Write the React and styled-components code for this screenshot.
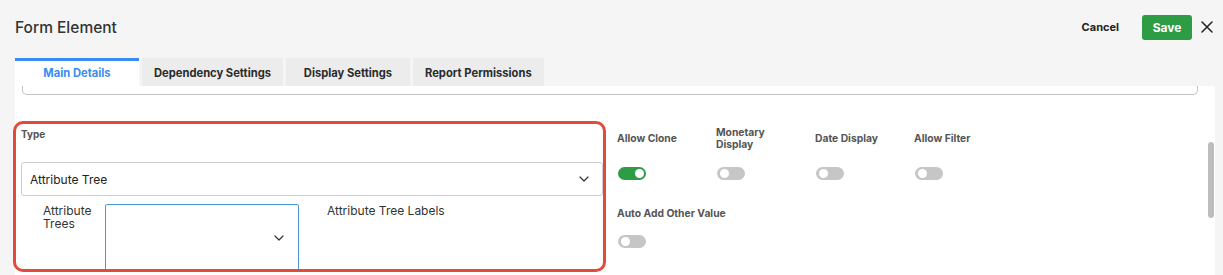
import React, { useState } from "react";
import styled, { createGlobalStyle } from "styled-components";

const GlobalStyle = createGlobalStyle`
  html, body {
    margin: 0;
    padding: 0;
    height: 100%;
    background: #f5f5f5;
    font-family: Inter, "Noto Sans", Arial, sans-serif;
    color: #333;
    overflow: hidden;
  }
  #root {
    height: 100%;
  }
`;

const Page = styled.div`
  height: 275px;
  display: flex;
  flex-direction: column;
  overflow: hidden;
`;

const Header = styled.div`
  height: 54px;
  padding: 0 9px 0 15px;
  display: flex;
  align-items: center;
  justify-content: space-between;
  h1 {
    margin: 0;
    font-size: 15.5px;
    font-weight: 500;
    color: #333;
  }
`;

const Actions = styled.div`
  display: flex;
  align-items: center;
`;

const TextButton = styled.button`
  background: none;
  border: none;
  font-family: inherit;
  font-size: 11px;
  font-weight: 700;
  color: #222;
  padding: 0;
  margin-right: 23px;
  cursor: pointer;
`;

const SaveButton = styled.button`
  background: #2d9c44;
  color: white;
  border: none;
  border-radius: 3px;
  width: 50px;
  height: 25px;
  font-family: inherit;
  font-size: 12px;
  font-weight: 700;
  cursor: pointer;
  margin-right: 8px;
`;

const CloseButton = styled.button`
  background: none;
  border: none;
  padding: 0;
  width: 14px;
  height: 14px;
  display: flex;
  align-items: center;
  justify-content: center;
  cursor: pointer;
`;

const Tabs = styled.div`
  display: flex;
  gap: 3px;
  padding-left: 15px;
  margin-top: 4px;
`;

const Tab = styled.div`
  height: 28px;
  min-width: 124px;
  box-sizing: border-box;
  padding: 0 12px;
  display: flex;
  align-items: center;
  justify-content: center;
  font-size: 11.2px;
  font-weight: 700;
  cursor: pointer;
  background: ${(p) => (p.$active ? "#fff" : "#ececec")};
  color: ${(p) => (p.$active ? "#3b8cf0" : "#2a2a2a")};
  border-top: 3px solid ${(p) => (p.$active ? "#3b8cf0" : "transparent")};
  padding-bottom: 1px;
`;

const Panel = styled.div`
  position: relative;
  flex: 1;
  margin: 0 8px 0 15px;
  background: #fff;
  padding: 0 17px 0 7px;
`;

const CutInput = styled.div`
  height: 8px;
  border: 1px solid #c2c2c2;
  border-top: none;
  border-radius: 0 0 5px 5px;
`;

const Thumb = styled.div`
  position: absolute;
  right: 1px;
  top: 56px;
  width: 6px;
  height: 76px;
  border-radius: 3px;
  background: #bdbdbd;
`;

const FormRow = styled.div`
  display: flex;
  align-items: flex-start;
  margin-top: 26px;
`;

const Highlight = styled.div`
  width: 593px;
  box-sizing: border-box;
  margin-left: -9px;
  border: 3px solid #e24b3b;
  border-radius: 10px;
  padding: 3px 0 0 5px;
  height: 151px;
  overflow: hidden;
`;

const FieldLabel = styled.div`
  font-size: 10px;
  font-weight: 700;
  color: #555;
  line-height: 14px;
`;

const Select = styled.div`
  display: flex;
  align-items: center;
  justify-content: space-between;
  box-sizing: border-box;
  height: 34px;
  margin-top: 21px;
  border: 1px solid #ccc;
  border-radius: 3px;
  padding: 0 13px 0 8px;
  font-size: 12px;
  color: #222;
`;

const TreeRow = styled.div`
  display: flex;
  align-items: flex-start;
  margin-top: 8px;
  padding-left: 22px;
`;

const TreeLabel = styled.div`
  width: 62px;
  font-size: 12px;
  line-height: 13px;
  color: #333;
`;

const TreeSelect = styled.div`
  width: 194px;
  height: 67px;
  box-sizing: border-box;
  border: 1px solid #4a9ad8;
  border-radius: 2px;
  display: flex;
  align-items: center;
  justify-content: flex-end;
  padding-right: 14px;
`;

const TreeLabels = styled.div`
  margin-left: 28px;
  margin-top: -1px;
  font-size: 12px;
  color: #333;
`;

const Options = styled.div`
  margin-left: 11px;
  padding-top: 5px;
`;

const OptionRow = styled.div`
  display: grid;
  grid-template-columns: repeat(4, 99px);
  margin-bottom: 27px;
`;

const Option = styled.div`
  display: flex;
  flex-direction: column;
  grid-column: span ${(p) => p.$span || 1};
`;

const OptionLabel = styled.div`
  height: ${(p) => p.$height}px;
  max-width: ${(p) => (p.$wide ? "none" : "72px")};
  display: flex;
  align-items: center;
  font-size: 10.3px;
  font-weight: 700;
  line-height: 12px;
  color: #555;
  margin-bottom: ${(p) => p.$gap}px;
`;

const Toggle = styled.button`
  position: relative;
  width: 28px;
  height: 13px;
  padding: 0;
  border: none;
  border-radius: 7px;
  margin-left: 1px;
  background: ${(p) => (p.$on ? "#2d9c44" : "#c6c6c6")};
  cursor: pointer;
  &::after {
    content: "";
    position: absolute;
    top: 2px;
    left: ${(p) => (p.$on ? "17px" : "3px")};
    width: 9px;
    height: 9px;
    border-radius: 50%;
    background: #fff;
  }
`;

const Chevron = () => (
  <svg width="10" height="6" viewBox="0 0 10 6" fill="none">
    <path d="M1 1l4 4 4-4" stroke="#333" strokeWidth="1.2" strokeLinecap="round" strokeLinejoin="round" />
  </svg>
);

const firstRow = [
  { label: "Allow Clone", on: true },
  { label: "Monetary Display", on: false },
  { label: "Date Display", on: false },
  { label: "Allow Filter", on: false },
];

export default function App() {
  const [toggles, setToggles] = useState(firstRow.map((f) => f.on).concat(false));
  const flip = (i) => setToggles((t) => t.map((v, j) => (j === i ? !v : v)));

  return (
    <Page>
      <GlobalStyle />
      <Header>
        <h1>Form Element</h1>
        <Actions>
          <TextButton>Cancel</TextButton>
          <SaveButton>Save</SaveButton>
          <CloseButton aria-label="close">
            <svg width="12" height="12" viewBox="0 0 12 12">
              <path d="M1 1l10 10M11 1L1 11" stroke="#222" strokeWidth="1.5" strokeLinecap="round" />
            </svg>
          </CloseButton>
        </Actions>
      </Header>
      <Tabs>
        <Tab $active>Main Details</Tab>
        <Tab>Dependency Settings</Tab>
        <Tab>Display Settings</Tab>
        <Tab>Report Permissions</Tab>
      </Tabs>
      <Panel>
        <CutInput />
        <FormRow>
          <Highlight>
            <FieldLabel>Type</FieldLabel>
            <Select>
              Attribute Tree
              <Chevron />
            </Select>
            <TreeRow>
              <TreeLabel>
                Attribute
                <br />
                Trees
              </TreeLabel>
              <TreeSelect>
                <Chevron />
              </TreeSelect>
              <TreeLabels>Attribute Tree Labels</TreeLabels>
            </TreeRow>
          </Highlight>
          <Options>
            <OptionRow>
              {firstRow.map((f, i) => (
                <Option key={f.label}>
                  <OptionLabel $height={24} $gap={17}>
                    {f.label}
                  </OptionLabel>
                  <Toggle $on={toggles[i]} onClick={() => flip(i)} />
                </Option>
              ))}
            </OptionRow>
            <OptionRow>
              <Option $span={2}>
                <OptionLabel $height={12} $gap={16} $wide>
                  Auto Add Other Value
                </OptionLabel>
                <Toggle $on={toggles[4]} onClick={() => flip(4)} />
              </Option>
            </OptionRow>
          </Options>
        </FormRow>
        <Thumb />
      </Panel>
    </Page>
  );
}
